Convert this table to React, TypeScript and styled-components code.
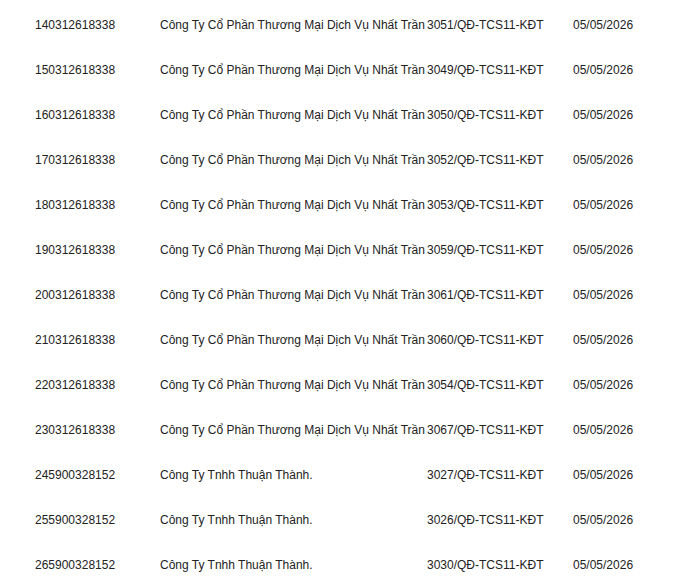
import React from "react";
import styled, { createGlobalStyle } from "styled-components";

const GlobalStyle = createGlobalStyle`
    html, body {
        margin: 0;
        padding: 0;
        background: #ffffff;
    }
    body {
        font-family: "Liberation Sans", Arial, sans-serif;
        font-size: 12px;
        color: #222222;
    }
`;

interface Decision {
    taxCode: string;
    company: string;
    number: string;
    date: string;
}

const NHAT_TRAN = "Công Ty Cổ Phần Thương Mại Dịch Vụ Nhất Trần";
const THUAN_THANH = "Công Ty Tnhh Thuận Thành.";

const ROWS: Decision[] = [
    { taxCode: "140312618338", company: NHAT_TRAN, number: "3051/QĐ-TCS11-KĐT", date: "05/05/2026" },
    { taxCode: "150312618338", company: NHAT_TRAN, number: "3049/QĐ-TCS11-KĐT", date: "05/05/2026" },
    { taxCode: "160312618338", company: NHAT_TRAN, number: "3050/QĐ-TCS11-KĐT", date: "05/05/2026" },
    { taxCode: "170312618338", company: NHAT_TRAN, number: "3052/QĐ-TCS11-KĐT", date: "05/05/2026" },
    { taxCode: "180312618338", company: NHAT_TRAN, number: "3053/QĐ-TCS11-KĐT", date: "05/05/2026" },
    { taxCode: "190312618338", company: NHAT_TRAN, number: "3059/QĐ-TCS11-KĐT", date: "05/05/2026" },
    { taxCode: "200312618338", company: NHAT_TRAN, number: "3061/QĐ-TCS11-KĐT", date: "05/05/2026" },
    { taxCode: "210312618338", company: NHAT_TRAN, number: "3060/QĐ-TCS11-KĐT", date: "05/05/2026" },
    { taxCode: "220312618338", company: NHAT_TRAN, number: "3054/QĐ-TCS11-KĐT", date: "05/05/2026" },
    { taxCode: "230312618338", company: NHAT_TRAN, number: "3067/QĐ-TCS11-KĐT", date: "05/05/2026" },
    { taxCode: "245900328152", company: THUAN_THANH, number: "3027/QĐ-TCS11-KĐT", date: "05/05/2026" },
    { taxCode: "255900328152", company: THUAN_THANH, number: "3026/QĐ-TCS11-KĐT", date: "05/05/2026" },
    { taxCode: "265900328152", company: THUAN_THANH, number: "3030/QĐ-TCS11-KĐT", date: "05/05/2026" },
];

const App: React.FC = () => {
    return (
        <>
            <GlobalStyle />
            <Style.List>
                {ROWS.map((row) => (
                    <Style.Row key={row.taxCode}>
                        <Style.Cell>{row.taxCode}</Style.Cell>
                        <Style.Cell>{row.company}</Style.Cell>
                        <Style.Cell>{row.number}</Style.Cell>
                        <Style.Cell>{row.date}</Style.Cell>
                    </Style.Row>
                ))}
            </Style.List>
        </>
    );
};

export default App;

const Style = {
    List: styled.div`
        display: flex;
        flex-direction: column;
        padding-top: 2px;
        width: 681px;
    `,

    Row: styled.div`
        display: grid;
        grid-template-columns: 125px 267px 146px auto;
        align-items: center;
        height: 45px;
        padding-left: 35px;
    `,

    Cell: styled.div`
        white-space: nowrap;
        line-height: 14px;
    `,
};
